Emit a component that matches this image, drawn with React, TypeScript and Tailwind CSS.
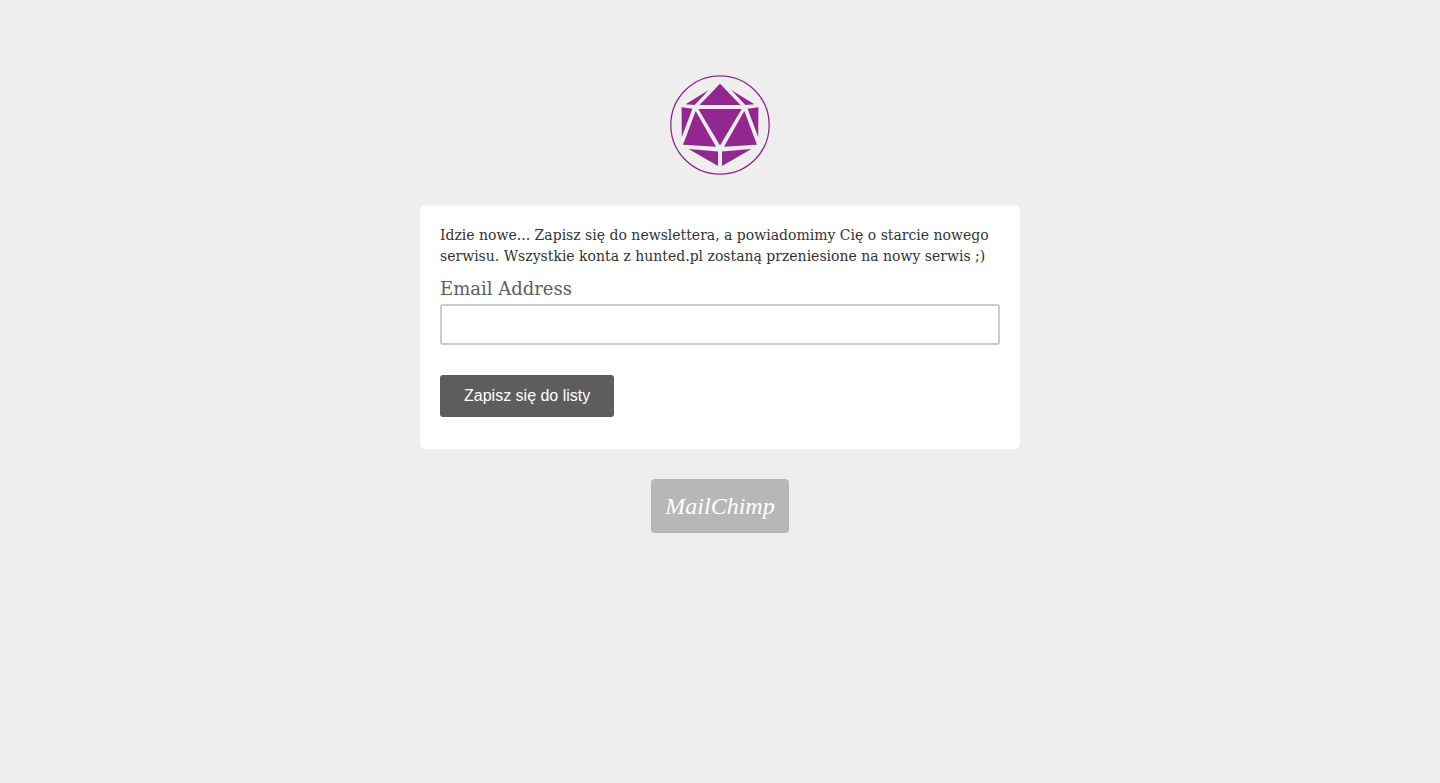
function DiceLogo() {
  return (
    <svg viewBox="0 0 100 100" className="size-25" role="img" aria-label="Hunted">
      <circle cx="50" cy="50" r="49.2" fill="none" stroke="#92278f" strokeWidth="1.3" />
      <g fill="#92278f">
        <path d="M50 8.7 70.5 30H29.5Z" />
        <path d="M38.8 15 24.6 30 15.6 29.2Z" />
        <path d="M61.2 15 75.4 30 84.4 29.2Z" />
        <path d="M28.3 34H71.7L50 70.6Z" />
        <path d="M11.6 32.3 22.4 33.8 11.8 62Z" />
        <path d="M88.4 32.3 77.6 33.8 88.2 62Z" />
        <path d="M25.7 36 46 71.8 13 69.7Z" />
        <path d="M74.3 36 54 71.8 87 69.7Z" />
        <path d="M18.6 74 48 76.5V91Z" />
        <path d="M81.4 74 52 76.5V91Z" />
      </g>
    </svg>
  );
}

export default function App() {
  return (
    <div className="min-h-screen bg-[#eeeeee] px-4 py-[75px]">
      <main className="mx-auto flex w-full max-w-[600px] flex-col items-center gap-[30px]">
        <DiceLogo />

        <form
          className="w-full rounded-md bg-white px-5 pt-5 pb-8"
          onSubmit={(event) => event.preventDefault()}
        >
          <p className="font-['DejaVu_Serif',serif] text-sm leading-[21px] text-[#333333]">
            Idzie nowe... Zapisz się do newslettera, a powiadomimy Cię o starcie nowego serwisu.
            Wszystkie konta z hunted.pl zostaną przeniesione na nowy serwis ;)
          </p>

          <label
            htmlFor="email"
            className="mt-2 block font-['DejaVu_Serif',serif] text-lg leading-[27px] text-[#5d5d5d]"
          >
            Email Address
          </label>
          <input
            id="email"
            type="email"
            name="email"
            className="mt-0.5 block h-[41px] w-full rounded-[3px] border-2 border-[#cccccc] bg-white px-2 font-['Liberation_Sans',sans-serif] text-base text-[#333333] outline-none focus:border-[#5d5d5d]"
          />

          <button
            type="submit"
            className="mt-[30px] block h-[42px] cursor-pointer rounded-[3px] bg-[#5d5d5d] px-6 font-['Liberation_Sans',sans-serif] text-base text-white hover:bg-[#444444]"
          >
            Zapisz się do listy
          </button>
        </form>

        <a
          href="https://www.mailchimp.com/"
          className="flex h-[54px] items-center rounded bg-[#b7b7b7] px-3.5 font-['Liberation_Serif',serif] text-2xl text-white italic"
        >
          MailChimp
        </a>
      </main>
    </div>
  );
}
